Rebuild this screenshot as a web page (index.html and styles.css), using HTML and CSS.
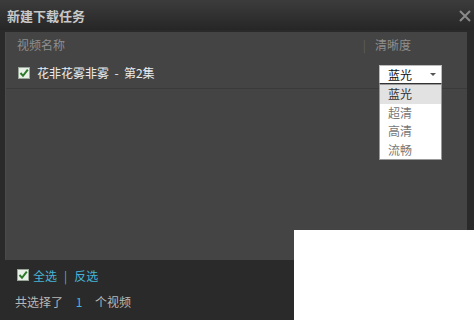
FILE: index.html
```html
<!DOCTYPE html>
<html lang="zh-CN">
<head>
  <meta charset="UTF-8">
  <title>新建下载任务</title>
  <link rel="stylesheet" href="styles.css">
</head>
<body>
  <div class="dialog">
    <div class="dialog-title">
      <span>新建下载任务</span>
      <svg class="dialog-close" width="12" height="12" viewBox="0 0 12 12"><path d="M1 1L11 11M11 1L1 11" stroke="#8a8a8a" stroke-width="2"/></svg>
    </div>
    <div class="task-panel">
      <div class="task-head">
        <span class="col-name">视频名称</span>
        <span class="col-sep">|</span>
        <span class="col-quality">清晰度</span>
      </div>
      <div class="task-row">
        <svg class="check" width="12" height="12" viewBox="0 0 12 12"><rect x="0.5" y="0.5" width="11" height="11" fill="#e8f0e8" stroke="#9aa59a"/><path d="M2.5 6L5 8.8L9.8 2.6" fill="none" stroke="#2a7a2a" stroke-width="2"/></svg>
        <span class="task-title">花非花雾非雾 &nbsp;-&nbsp; 第2集</span>
        <div class="quality">
          <div class="quality-select">蓝光<span class="quality-arrow"></span></div>
          <ul class="quality-list">
            <li class="active">蓝光</li>
            <li>超清</li>
            <li>高清</li>
            <li>流畅</li>
          </ul>
        </div>
      </div>
    </div>
    <div class="dialog-foot">
      <div class="select-links">
        <svg class="check" width="12" height="12" viewBox="0 0 12 12"><rect x="0.5" y="0.5" width="11" height="11" fill="#e8f0e8" stroke="#9aa59a"/><path d="M2.5 6L5 8.8L9.8 2.6" fill="none" stroke="#2a7a2a" stroke-width="2"/></svg>
        <a>全选</a><span class="link-sep">|</span><a>反选</a>
      </div>
      <div class="select-count">共选择了 <span class="count">1</span> 个视频</div>
    </div>
  </div>
  <div class="cover"></div>
</body>
</html>
```

FILE: styles.css
```css
html, body {
  margin: 0;
  padding: 0;
}
body {
  width: 474px;
  height: 320px;
  overflow: hidden;
  position: relative;
  background: #2b2b2b;
  font-family: "Noto Sans CJK SC", "Liberation Sans", sans-serif;
  font-size: 12px;
}
.dialog {
  height: 320px;
  background: #2a2a2a;
}
.dialog-title {
  height: 30px;
  display: flex;
  align-items: center;
  justify-content: space-between;
  padding: 0 3px 0 7px;
  background: linear-gradient(#3c3c3c, #262626);
  color: #c8c8c8;
  font-weight: bold;
  font-size: 13px;
}
.dialog-close {
  margin-top: 1px;
}
.task-panel {
  margin: 2px 7px 0 5px;
  height: 228px;
  background: #444;
  border-left: 1px solid #4a4a4a;
}
.task-head {
  display: flex;
  align-items: center;
  height: 25px;
  padding-left: 11px;
  color: #8e8e8e;
}
.col-name {
  flex: 1;
}
.col-sep {
  color: #5e5e5e;
  margin-right: 9px;
}
.col-quality {
  width: 92px;
}
.task-row {
  display: flex;
  align-items: center;
  height: 31px;
  padding-left: 12px;
  border-bottom: 1px solid #3a3a3a;
}
.check {
  flex: none;
}
.task-title {
  flex: 1;
  margin-left: 7px;
  color: #ececec;
}
.quality {
  position: relative;
  width: 63px;
  margin-right: 25px;
  margin-top: 4px;
}
.quality-select {
  height: 17px;
  line-height: 17px;
  background: #fff;
  border: 1px solid #bbb;
  border-bottom-color: #333;
  color: #111;
  padding-left: 8px;
  position: relative;
}
.quality-arrow {
  position: absolute;
  right: 5px;
  top: 7px;
  border-left: 3px solid transparent;
  border-right: 3px solid transparent;
  border-top: 3px solid #555;
}
.quality-list {
  position: absolute;
  left: 0;
  top: 19px;
  width: 61px;
  margin: 0;
  padding: 0;
  list-style: none;
  background: #fff;
  border: 1px solid #999;
  color: #777;
}
.quality-list li {
  height: 18.5px;
  line-height: 18.5px;
  padding-left: 8px;
}
.quality-list li.active {
  background: #e2e2e2;
  color: #333;
}
.dialog-foot {
  padding: 7px 0 0 15px;
  color: #b8b8b8;
}
.select-links {
  display: flex;
  align-items: center;
  height: 16px;
  padding-left: 2px;
}
.select-links a {
  color: #46b4d6;
}
.select-links .check {
  margin-right: 4px;
}
.link-sep {
  color: #46b4d6;
  margin: 0 7px;
}
.select-count {
  margin-top: 10px;
}
.count {
  color: #46b4d6;
  margin: 0 10px;
}
.cover {
  position: absolute;
  left: 294px;
  top: 230px;
  width: 180px;
  height: 90px;
  background: #fff;
}
```
